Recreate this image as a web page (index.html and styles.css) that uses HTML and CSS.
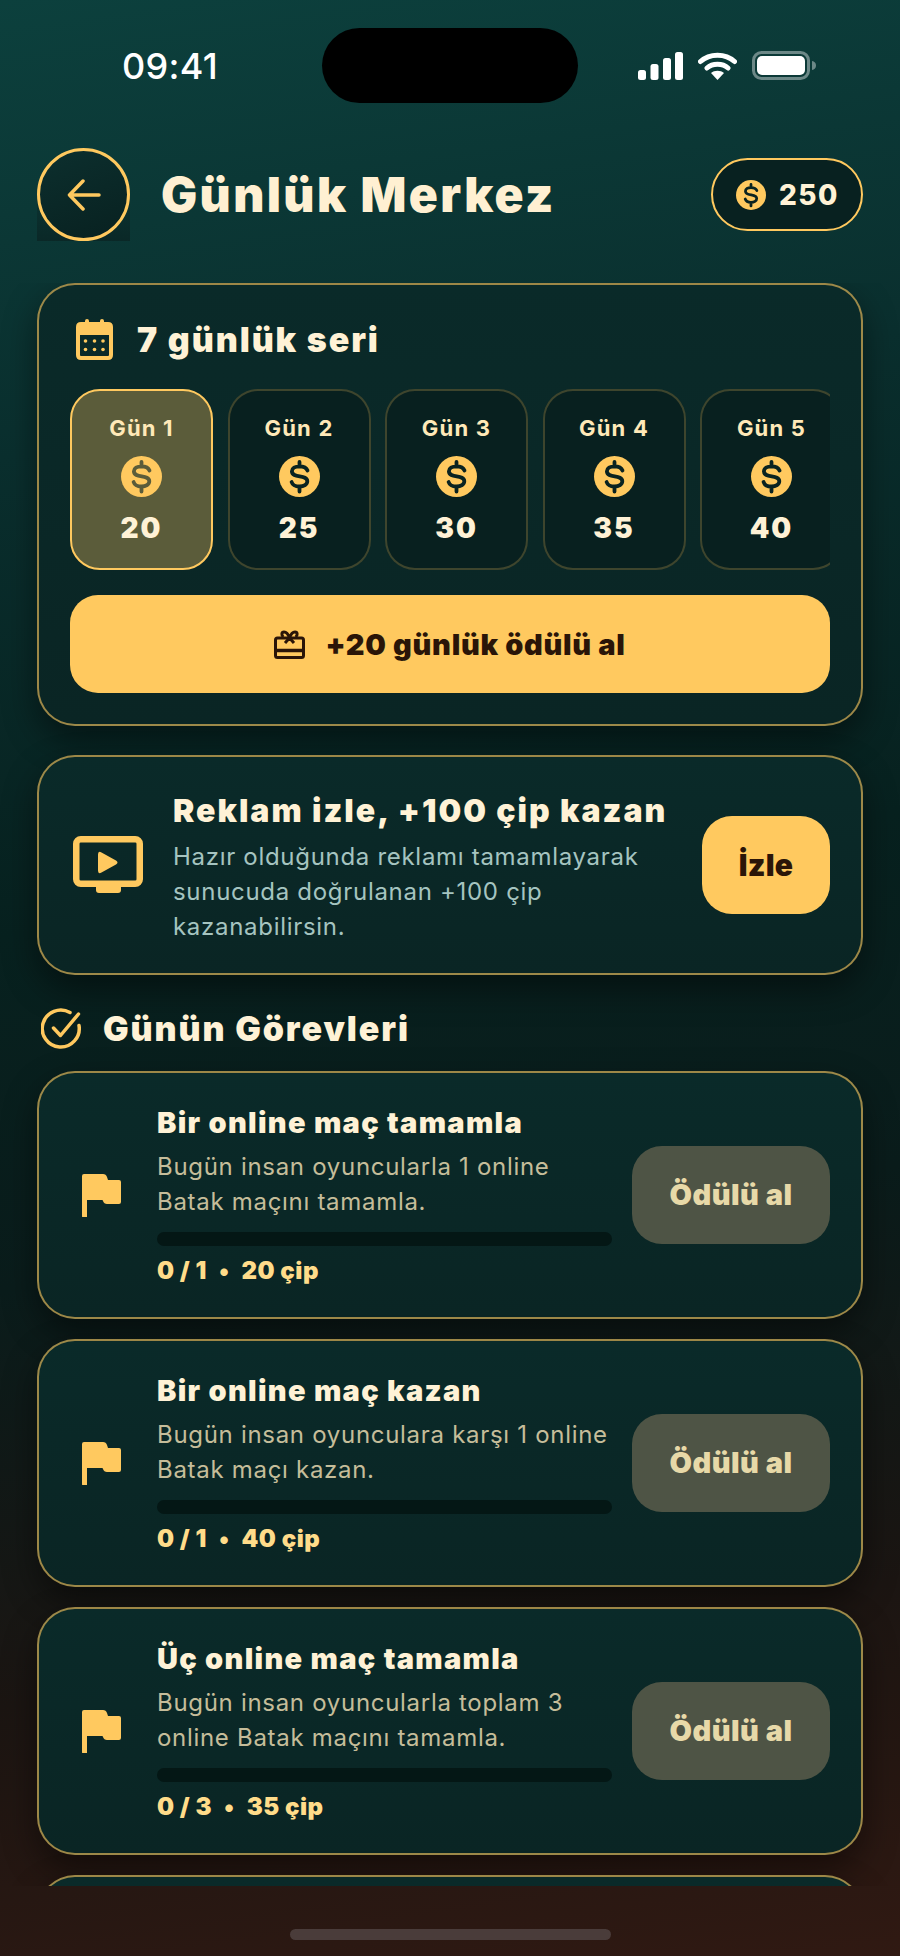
FILE: index.html
```html
<!DOCTYPE html>
<html lang="tr">
<head>
  <meta charset="UTF-8" />
  <meta name="viewport" content="width=device-width, initial-scale=1.0"/>
  <title>Günlük Merkez</title>
  <link rel="stylesheet" href="styles.css">
</head>
<body>

  <svg class="sprites" width="0" height="0" aria-hidden="true">
    <symbol id="coin" viewBox="0 0 41 41">
      <circle cx="20.5" cy="20.5" r="20.5" fill="#ffc95f"/>
      <path d="M28.500 14.500c-1-2.600-4.300-4.200-8-4.200-4.300 0-7.600 2-7.600 5 0 7.400 15.400 2.900 15.400 10 0 3.100-3.500 5.200-7.800 5.200-3.800 0-7-1.700-7.900-4.500M20.500 6v4.500M20.500 31v4.500" fill="none" stroke="currentColor" stroke-width="3.800" stroke-linecap="round"/>
    </symbol>
    <symbol id="flag" viewBox="0 0 39 43">
      <path d="M2 0h19q3 0 4 3l1 3h11q2 0 2 2v20q0 2-2 2H25q-3 0-4-3l-.5-1H5v17.500q0 2.500-2.500 2.500T0 41V2q0-2 2-2z" fill="#ffc95f"/>
    </symbol>
  </svg>

  <div class="status">
    <span class="time">09:41</span>
    <div class="island"></div>
    <div class="status-icons">
      <svg width="45" height="28" viewBox="0 0 45 28"><g fill="#fff"><rect x="0" y="18" width="8" height="10" rx="2.500"/><rect x="12.500" y="12" width="8" height="16" rx="2.500"/><rect x="25" y="6" width="8" height="22" rx="2.500"/><rect x="37" y="0" width="8" height="28" rx="2.500"/></g></svg>
      <svg width="39" height="28" viewBox="0 0 39 28"><path d="M2.500 9.500C11.500 1 27.500 1 36.500 9.500M9 16c5.500-5 15.500-5 21 0" fill="none" stroke="#fff" stroke-width="5" stroke-linecap="round"/><path d="M13 21c3.500-3 9.500-3 13 0l-6.500 7z" fill="#fff"/></svg>
      <svg width="64" height="29" viewBox="0 0 64 29"><rect x="1.500" y="1.500" width="55" height="26" rx="8" fill="none" stroke="#fff" stroke-opacity=".4" stroke-width="3"/><rect x="5" y="5" width="48" height="19" rx="5" fill="#fff"/><path d="M60 10c2.500.5 4 2 4 4.500s-1.500 4-4 4.500z" fill="#fff" fill-opacity=".4"/></svg>
    </div>
  </div>

  <header class="topbar">
    <div class="back-wrap">
      <button class="back" type="button">
        <svg width="34" height="32" viewBox="0 0 34 32"><path d="M32 16H3M16 2 2.500 16 16 30" fill="none" stroke="#ffc95f" stroke-width="3.500" stroke-linecap="round" stroke-linejoin="round"/></svg>
      </button>
    </div>
    <h1>Günlük Merkez</h1>
    <div class="balance">
      <svg class="coin" width="30" height="30"><use href="#coin"/></svg>
      <span>250</span>
    </div>
  </header>

  <main class="content">
    <section class="card streak">
      <div class="card-head">
        <svg width="37" height="41" viewBox="0 0 37 41">
          <path d="M5 3h4V2a2 2 0 0 1 4 0v1h11V2a2 2 0 0 1 4 0v1h4q5 0 5 5v28q0 5-5 5H5q-5 0-5-5V8q0-5 5-5zM4 16v20q0 1 1 1h27q1 0 1-1V16z" fill="#ffc95f" fill-rule="evenodd"/>
          <g fill="#ffc95f"><circle cx="9.500" cy="22" r="1.800"/><circle cx="18.500" cy="22" r="1.800"/><circle cx="27" cy="22" r="1.800"/><circle cx="9.500" cy="30.500" r="1.800"/><circle cx="18.500" cy="30.500" r="1.800"/><circle cx="27" cy="30.500" r="1.800"/></g>
        </svg>
        <h2>7 günlük seri</h2>
      </div>

      <div class="days">
        <div class="day day-active">
          <span class="day-name">Gün 1</span>
          <svg class="coin" width="41" height="41"><use href="#coin"/></svg>
          <span class="day-value">20</span>
        </div>
        <div class="day">
          <span class="day-name">Gün 2</span>
          <svg class="coin" width="41" height="41"><use href="#coin"/></svg>
          <span class="day-value">25</span>
        </div>
        <div class="day">
          <span class="day-name">Gün 3</span>
          <svg class="coin" width="41" height="41"><use href="#coin"/></svg>
          <span class="day-value">30</span>
        </div>
        <div class="day">
          <span class="day-name">Gün 4</span>
          <svg class="coin" width="41" height="41"><use href="#coin"/></svg>
          <span class="day-value">35</span>
        </div>
        <div class="day">
          <span class="day-name">Gün 5</span>
          <svg class="coin" width="41" height="41"><use href="#coin"/></svg>
          <span class="day-value">40</span>
        </div>
      </div>

      <button class="claim" type="button">
        <svg width="31" height="29" viewBox="0 0 31 29" fill="none" stroke="#2a1508" stroke-width="3" stroke-linejoin="round">
          <rect x="1.500" y="8" width="28" height="19.500" rx="2"/>
          <path d="M1.500 20.500h28" stroke-width="3.500"/>
          <path d="M15.500 8c-1-3-3-6-5.500-6S7 5.500 9.500 7M15.500 8c1-3 3-6 5.500-6s3 3.500.5 5M11 13l4.500-5 4.500 5"/>
        </svg>
        <span>+20 günlük ödülü al</span>
      </button>
    </section>

    <section class="card ad">
      <svg class="ad-icon" width="71" height="59" viewBox="0 0 71 59">
        <rect x="3.250" y="3.250" width="63.500" height="44.500" rx="4.500" fill="none" stroke="#ffc95f" stroke-width="6.500"/>
        <path d="M25 18.500q0-4 3.500-2l14.500 8q3 2 0 4l-14.500 8q-3.500 2-3.500-2z" fill="#ffc95f"/>
        <path d="M23 50h25v4q0 3-3 3H26q-3 0-3-3z" fill="#ffc95f"/>
      </svg>
      <div class="ad-body">
        <h3>Reklam izle, +100 çip kazan</h3>
        <p>Hazır olduğunda reklamı tamamlayarak sunucuda doğrulanan +100 çip kazanabilirsin.</p>
      </div>
      <button class="watch" type="button">İzle</button>
    </section>

    <div class="section-title">
      <svg width="41" height="41" viewBox="0 0 41 41" fill="none" stroke="#ffc95f" stroke-width="3.500" stroke-linecap="round" stroke-linejoin="round">
        <path d="M38 17.500A18.500 18.500 0 1 1 29 4.500"/>
        <path d="M12.500 20l7 7.500L37.500 6"/>
      </svg>
      <h2>Günün Görevleri</h2>
    </div>

    <div class="tasks">
      <article class="card task">
        <svg class="task-icon" width="39" height="43"><use href="#flag"/></svg>
        <div class="task-body">
          <h4>Bir online maç tamamla</h4>
          <p>Bugün insan oyuncularla 1 online Batak maçını tamamla.</p>
          <div class="bar"></div>
          <span class="task-meta">0 / 1 <span class="dot">•</span> 20 çip</span>
        </div>
        <button class="reward" type="button" disabled>Ödülü al</button>
      </article>

      <article class="card task">
        <svg class="task-icon" width="39" height="43"><use href="#flag"/></svg>
        <div class="task-body">
          <h4>Bir online maç kazan</h4>
          <p>Bugün insan oyunculara karşı 1 online Batak maçı kazan.</p>
          <div class="bar"></div>
          <span class="task-meta">0 / 1 <span class="dot">•</span> 40 çip</span>
        </div>
        <button class="reward" type="button" disabled>Ödülü al</button>
      </article>

      <article class="card task">
        <svg class="task-icon" width="39" height="43"><use href="#flag"/></svg>
        <div class="task-body">
          <h4>Üç online maç tamamla</h4>
          <p>Bugün insan oyuncularla toplam 3 online Batak maçını tamamla.</p>
          <div class="bar"></div>
          <span class="task-meta">0 / 3 <span class="dot">•</span> 35 çip</span>
        </div>
        <button class="reward" type="button" disabled>Ödülü al</button>
      </article>

      <article class="card task task-next"></article>
    </div>
  </main>

  <footer class="home">
    <div class="home-bar"></div>
  </footer>

</body>
</html>
```

FILE: styles.css
```css
* {
  box-sizing: border-box;
}

html, body {
  margin: 0;
  height: 100%;
}

body {
  width: 900px;
  height: 1956px;
  overflow: hidden;
  display: flex;
  flex-direction: column;
  background: linear-gradient(172deg, #0c403d 0%, #0a2f2e 22%, #07211f 45%, #0a1c1b 62%, #1b1512 82%, #301912 100%);
  font-family: 'Inter', 'Liberation Sans', sans-serif;
  color: #fff2d6;
}

h1, h2, h3, h4, p {
  margin: 0;
}

button {
  border: none;
  font-family: inherit;
  cursor: pointer;
}

.sprites {
  position: absolute;
}

/* status bar */
.status {
  flex: none;
  display: grid;
  grid-template-columns: 322px 256px 1fr;
  align-items: center;
  margin-top: 28px;
  height: 75px;
}

.time {
  padding-left: 122px;
  font-size: 36px;
  font-weight: 500;
  letter-spacing: 0.3px;
  color: #fff;
}

.island {
  height: 75px;
  background: #000;
  border-radius: 38px;
}

.status-icons {
  display: flex;
  align-items: center;
  gap: 15px;
  padding-left: 60px;
}

/* header */
.topbar {
  flex: none;
  display: flex;
  align-items: center;
  margin: 45px 37px 42px;
}

.back-wrap {
  width: 93px;
  height: 93px;
  background: linear-gradient(to bottom, transparent 35%, #0a2827);
}

.back {
  width: 93px;
  height: 93px;
  display: flex;
  align-items: center;
  justify-content: center;
  padding: 0;
  border: 3px solid #ffc95f;
  border-radius: 50%;
  background: linear-gradient(160deg, #0c2f2e, #082120);
}

h1 {
  flex: 1;
  margin-left: 31px;
  font-size: 48px;
  font-weight: 900;
  color: #fff0d2;
  letter-spacing: 2.4px;
}

.balance {
  width: 152px;
  height: 73px;
  display: flex;
  align-items: center;
  gap: 13px;
  padding-left: 23px;
  border: 2.5px solid #ffc95f;
  border-radius: 37px;
  background: #082120;
  font-size: 28px;
  font-weight: 800;
  letter-spacing: 1.5px;
}

.coin {
  flex: none;
  color: #0a2321;
}

/* scrolling part */
.content {
  flex: 1;
  min-height: 0;
  overflow: hidden;
  padding: 0 37px;
}

.card {
  border: 2px solid rgba(255, 201, 95, 0.6);
  border-radius: 38px;
  background: linear-gradient(180deg, #0a2a29, #0a2524);
  box-shadow: 0 14px 34px rgba(0, 0, 0, 0.45);
}

/* streak */
.streak {
  padding: 34px 31px 31px;
}

.card-head {
  display: flex;
  align-items: center;
  gap: 24px;
  padding-left: 6px;
}

.card-head h2 {
  font-size: 34px;
  font-weight: 900;
  letter-spacing: 1.9px;
}

.days {
  display: flex;
  gap: 14.5px;
  margin-top: 29px;
  overflow: hidden;
}

.day {
  flex: none;
  width: 143px;
  height: 181px;
  display: flex;
  flex-direction: column;
  align-items: center;
  padding-top: 23px;
  border: 2px solid rgba(255, 201, 95, 0.22);
  border-radius: 30px;
  background: #08201f;
}

.day-active {
  border: 2.5px solid #ffc95f;
  background: #5b5c3a;
}

.day-active .coin {
  color: #5b5c3a;
}

.day-name {
  font-size: 22px;
  line-height: 28px;
  font-weight: 700;
  color: #ffe9b8;
  letter-spacing: 1.2px;
}

.day .coin {
  margin-top: 14px;
}

.day-value {
  margin-top: 14px;
  font-size: 28px;
  line-height: 34px;
  font-weight: 900;
  letter-spacing: 2px;
}

.claim {
  width: 100%;
  height: 98px;
  display: flex;
  align-items: center;
  justify-content: center;
  gap: 20px;
  margin-top: 25px;
  border-radius: 28px;
  background: #ffc95f;
  color: #2a1508;
  font-size: 29px;
  font-weight: 900;
  letter-spacing: 0.7px;
}

/* ad */
.ad {
  display: flex;
  align-items: center;
  margin-top: 29px;
  padding: 29px 31px 29px 34px;
}

.ad-icon {
  flex: none;
}

.ad-body {
  flex: 1;
  margin: 0 20px 0 29px;
  padding-top: 5px;
}

.ad-body h3 {
  font-size: 32px;
  line-height: 40px;
  font-weight: 900;
  letter-spacing: 2px;
}

.ad-body p {
  margin-top: 8px;
  font-size: 24px;
  line-height: 35px;
  color: #a5c4c0;
  letter-spacing: 0.7px;
}

.watch {
  flex: none;
  width: 128px;
  height: 98px;
  border-radius: 30px;
  background: #ffc95f;
  color: #2a1508;
  font-size: 30px;
  font-weight: 900;
  letter-spacing: 0.3px;
}

/* tasks */
.section-title {
  display: flex;
  align-items: center;
  gap: 21px;
  margin: 33px 0 22px;
  padding-left: 4px;
}

.section-title h2 {
  font-size: 34px;
  font-weight: 900;
  letter-spacing: 1.9px;
}

.tasks {
  display: flex;
  flex-direction: column;
  gap: 20px;
}

.task {
  flex: none;
  display: flex;
  align-items: center;
  padding: 32px 31px 31px 43px;
}

.task-next {
  height: 248px;
}

.task-icon {
  flex: none;
}

.task-body {
  flex: 1;
  margin: 0 20px 0 36px;
}

.task-body h4 {
  font-size: 29px;
  line-height: 36px;
  font-weight: 900;
  letter-spacing: 1.3px;
}

.task-body p {
  margin-top: 8px;
  font-size: 24px;
  line-height: 35px;
  color: #c5bd9a;
  letter-spacing: 0.7px;
}

.bar {
  height: 14px;
  margin-top: 13px;
  border-radius: 7px;
  background: #041715;
}

.task-meta {
  display: block;
  margin-top: 10px;
  font-size: 24px;
  line-height: 30px;
  font-weight: 900;
  color: #ffdc8a;
  letter-spacing: 0.5px;
}

.dot {
  margin: 0 7px;
}

.reward {
  flex: none;
  width: 198px;
  height: 98px;
  margin-bottom: 2px;
  border-radius: 30px;
  background: #4e5445;
  color: #e7d9a8;
  font-size: 29px;
  font-weight: 900;
  letter-spacing: 0.5px;
}

/* home indicator */
.home {
  flex: none;
  height: 70px;
  padding-top: 43px;
}

.home-bar {
  width: 321px;
  height: 11px;
  margin: 0 auto;
  border-radius: 6px;
  background: #4a3c3a;
}
```
